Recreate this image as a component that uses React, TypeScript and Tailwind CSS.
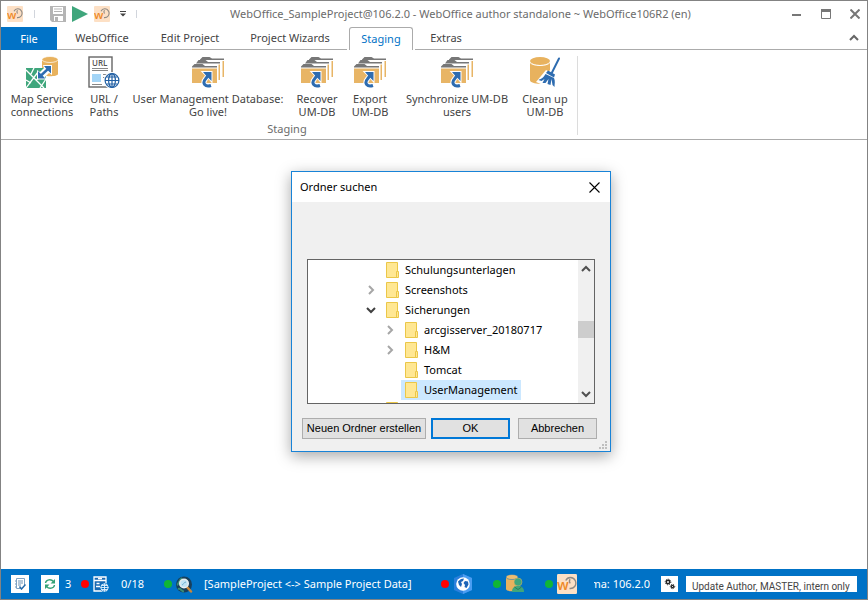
import React, { useState } from 'react';

const Logo = ({ size = 16 }: { size?: number }) => (
  <svg width={size} height={size} viewBox="0 0 16 16" aria-hidden="true">
    <rect width="16" height="16" rx="1" fill="#fde0c5" />
    <path d="M7 5.200C8.500 2 13 1.800 14.700 5.400C16 9 13.500 12 10 11.600M10.500 4.200C9.600 5.500 9.800 6.500 10.600 7.500" fill="none" stroke="#8f8a85" strokeWidth="1.100" />
    <text x="0" y="13" fontSize="11.500" fontWeight="600" fill="#ee8a2a" fontFamily="Open Sans, sans-serif">w</text>
  </svg>
);

const SaveIcon = () => (
  <svg width="16" height="16" viewBox="0 0 16 16" aria-hidden="true">
    <path d="M0 0h16v16H2l-2-2z" fill="#b5b5b5" />
    <rect x="3" y="1" width="10" height="7" fill="#fff" />
    <path d="M4 3h8M4 5.500h8" stroke="#b5b5b5" />
    <rect x="4" y="10" width="9" height="5" fill="#fff" />
    <rect x="5" y="11" width="3" height="4" fill="#b5b5b5" />
  </svg>
);

const MapServiceIcon = () => (
  <svg width="32" height="32" viewBox="0 0 32 32" aria-hidden="true">
    <path d="M16 3v15c0 3 16 3 16 0V3z" fill="#e8b25e" />
    <ellipse cx="24" cy="3.500" rx="8" ry="3" fill="#e8b25e" stroke="#fff" strokeWidth=".7" />
    <rect x="0" y="12" width="20" height="20" fill="#3fa67c" />
    <path d="M0 14l18 18M0 32l12-16M0 24l5 3M8 12l-3 6M14 32l6-9M10 24l10-6" stroke="#fff" strokeWidth="1.300" fill="none" />
    <path d="M17 9h9v10l-3-2-4 4 2 2.500H11V14l3 2 4-4z" fill="#fff" />
    <path d="M15 19.500l7.500-7" stroke="#2e6cb0" strokeWidth="2.400" />
    <path d="M18 10h7v7.500l-2.500-2.500-2.500-2.500zM12 15v7.500h7.500l-2.500-2.500-2.500-2.500z" fill="#2e6cb0" />
  </svg>
);

const UrlIcon = () => (
  <svg width="32" height="32" viewBox="0 0 32 32" aria-hidden="true">
    <rect x="1" y="1" width="23" height="30" fill="#fff" stroke="#666" strokeWidth="1.400" />
    <text x="4" y="10" fontSize="8" fontWeight="600" fill="#555" fontFamily="Open Sans, sans-serif">URL</text>
    <path d="M4 12.500h16M4 14.500h16M15 18.500h5M15 21.500h3M4 28.500h10" stroke="#888" />
    <rect x="4" y="18" width="9" height="8" fill="#a3d5f7" />
    <circle cx="24" cy="24.500" r="8.500" fill="#fff" />
    <g fill="none" stroke="#2260a4" strokeWidth="1.200">
      <circle cx="24" cy="24.500" r="6.900" />
      <ellipse cx="24" cy="24.500" rx="3.400" ry="6.900" />
      <path d="M24 17.500v14M17 24.500h14M18.500 21h11M18.500 28h11" />
    </g>
  </svg>
);

const FoldersIcon = () => (
  <svg width="32" height="32" viewBox="0 0 32 32" aria-hidden="true">
    <path d="M8 3.500L10.500 1h7L20 2.500h12v1.500H8z" fill="#777" />
    <path d="M4 7.500L6.500 4h7L16 6h12v1.500z" fill="#777" />
    <path d="M0 11.500V10.500L2.500 8h8L13 10h12v1.500z" fill="#777" />
    <path d="M0 12.500h25V27H0zM26.500 8.500H28V24h-1.500zM30.500 5H32v16h-1.500z" fill="#e8b566" />
    <path d="M19 29.500c-6 2-9-2.500-5.500-6.500l3-4" stroke="#fff" strokeWidth="5" fill="none" />
    <path d="M11 16h8.500v9l-3-3.500-2-2z" fill="#fff" stroke="#fff" strokeWidth="2" />
    <path d="M19 29.500c-6 2-9-2.500-5.500-6.500l3-4" stroke="#2e6cb0" strokeWidth="3" fill="none" />
    <path d="M11 16h8.500v9l-3-3-2.500-2.500z" fill="#2e6cb0" />
  </svg>
);

const CleanIcon = () => (
  <svg width="32" height="32" viewBox="0 0 32 32" aria-hidden="true">
    <path d="M1 6c3 4 17 4 20 0v18c0 5-20 5-20 0z" fill="#e8b25e" />
    <ellipse cx="11" cy="5" rx="10" ry="4" fill="#e8b25e" />
    <path d="M1 6.500c3 4 17 4 20 0" fill="none" stroke="#fff" />
    <path d="M31 2l-9 15" stroke="#fff" strokeWidth="5" />
    <path d="M17 14l12 6-3 12-7-1-12-5z" fill="#fff" />
    <path d="M30 2.500l-7 14" stroke="#2e6cb0" strokeWidth="2" strokeLinecap="round" />
    <path d="M19 14.500l7 4-1 3-8-4.500z" fill="#2e6cb0" />
    <path d="M16.500 18c-2 4-5 5-7 6l3 1 3-2-2 4h3l3-4-1 5 3 1 1-6 1 6 2 2c0-3 1-6-.500-9z" fill="#2e6cb0" />
  </svg>
);

const FolderIcon = () => (
  <svg width="13" height="16" viewBox="0 0 13 16" className="shrink-0" aria-hidden="true">
    <path d="M.5 .5h11v15H.5z" fill="#ffe793" stroke="#ebc748" />
    <path d="M10.500 9.500h2v6h-2z" fill="#ffe793" stroke="#ebc748" />
  </svg>
);

const Chevron = ({ d, color }: { d: string; color: string }) => (
  <svg width="10" height="10" viewBox="0 0 10 10" className="shrink-0" aria-hidden="true">
    <path d={d} fill="none" stroke={color} strokeWidth="2" />
  </svg>
);

const CheckListIcon = () => (
  <svg width="12" height="12" viewBox="0 0 12 12" aria-hidden="true">
    <path d="M2.500 .5h8v7M2.500 .5v10h4" fill="none" stroke="#7fa3c4" />
    <path d="M4 3h5M4 5h5M4 7h3M1 3h1M1 6h1M1 9h1" stroke="#6f93b5" />
    <path d="M5.500 8.500l2 2.500 4-4.500" fill="none" stroke="#2468a8" strokeWidth="1.500" />
  </svg>
);

const RefreshIcon = () => (
  <svg width="12" height="12" viewBox="0 0 12 12" aria-hidden="true">
    <path d="M1.500 5C2 1.500 7 .5 9.500 3.500M10.500 7C10 10.500 5 11.500 2.500 8.500" fill="none" stroke="#35a276" strokeWidth="1.400" />
    <path d="M11 1v4.500H6.500zM1 11V6.500h4.500z" fill="#35a276" />
  </svg>
);

const ServerIcon = () => (
  <svg width="16" height="16" viewBox="0 0 16 16" aria-hidden="true">
    <path d="M1 1h12v14H1z" fill="#1769b3" stroke="#fff" strokeWidth="1.300" />
    <path d="M1 4.500h12M3.500 7.500h3M3 10.500h4M5 2.500h4" stroke="#fff" strokeWidth="1.300" />
    <circle cx="11.500" cy="11.500" r="4.500" fill="#0072c6" />
    <g fill="none" stroke="#e4effa" strokeWidth=".9">
      <circle cx="11.500" cy="11.500" r="3.700" />
      <path d="M11.500 7.500v8M7.500 11.500h8M8.500 9.500h6M8.500 13.500h6" />
    </g>
  </svg>
);

const SearchGlobeIcon = () => (
  <svg width="17" height="17" viewBox="0 0 17 17" aria-hidden="true">
    <circle cx="8" cy="8.500" r="8" fill="#173f5c" />
    <path d="M1 9c2-1 2-5 5-7M2 13c3-1 3 2 6 2.500" stroke="#398c75" strokeWidth="2" fill="none" />
    <path d="M11 11l4 4.500" stroke="#c9863a" strokeWidth="2.500" strokeLinecap="round" />
    <circle cx="8" cy="7.500" r="4.300" fill="#bfe3f4" stroke="#e9eff1" strokeWidth="1.400" />
    <path d="M6 9c1 0 2-3 4-3" stroke="#67a9cc" fill="none" />
  </svg>
);

const HexGlobeIcon = () => (
  <svg width="18" height="20" viewBox="0 0 18 20" aria-hidden="true">
    <path d="M9 0l9 4v12l-9 4-9-4V4z" fill="#2b80dd" />
    <path d="M9 0l9 4v12l-9 4z" fill="#4a9df2" />
    <circle cx="9" cy="10" r="6.800" fill="#fff" />
    <path d="M4 7.500l3-2.500 3-.5-1 2.500-2 1 1 2-1 3-2-2zM11 7l3 .5.500 3-2 3.500-2-1 .5-2-1.500-2z" fill="#1e65b8" />
  </svg>
);

const DbUserIcon = () => (
  <svg width="18" height="20" viewBox="0 0 18 20" aria-hidden="true">
    <path d="M0 3v12c0 3 12 3 12 0V3z" fill="#e8b25e" />
    <ellipse cx="6" cy="3" rx="6" ry="2.500" fill="#eebd70" stroke="#0072c6" strokeWidth=".5" />
    <circle cx="12" cy="8" r="4" fill="#3fa67c" stroke="#e8b25e" strokeWidth=".5" />
    <path d="M6 18c0-5 3-6 6-6s6 1 6 6z" fill="#3fa67c" />
    <path d="M8.500 13l3.500 2.500 3.500-2.500" stroke="#2b7d5b" fill="none" />
  </svg>
);

const GearsIcon = () => (
  <svg width="12" height="12" viewBox="0 0 12 12" aria-hidden="true">
    <circle cx="4" cy="4" r="1.700" fill="none" stroke="#222" strokeWidth="1.500" />
    <circle cx="4" cy="4" r="2.800" fill="none" stroke="#222" strokeDasharray="1.100 1.100" />
    <circle cx="8.500" cy="8.500" r="1.200" fill="none" stroke="#222" strokeWidth="1.200" />
    <circle cx="8.500" cy="8.500" r="2.200" fill="none" stroke="#222" strokeDasharray="1 1" />
  </svg>
);

const tabs = [
  { name: 'WebOffice', width: 'w-[90px]' },
  { name: 'Edit Project', width: 'w-[86px]' },
  { name: 'Project Wizards', width: 'w-[114px]' },
  { name: 'Staging', width: 'w-16 mx-0.5' },
  { name: 'Extras', width: 'w-[62px]' }
];

const actions = [
  { lines: ['Map Service', 'connections'], icon: <MapServiceIcon />, width: 'w-[82px]' },
  { lines: ['URL /', 'Paths'], icon: <UrlIcon />, width: 'w-[42px]' },
  { lines: ['User Management Database:', 'Go live!'], icon: <FoldersIcon />, width: 'w-[166px]' },
  { lines: ['Recover', 'UM-DB'], icon: <FoldersIcon />, width: 'w-[52px]' },
  { lines: ['Export', 'UM-DB'], icon: <FoldersIcon />, width: 'w-[54px]' },
  { lines: ['Synchronize UM-DB', 'users'], icon: <FoldersIcon />, width: 'w-[120px]' },
  { lines: ['Clean up', 'UM-DB'], icon: <CleanIcon />, width: 'w-[56px]' }
];

const folders = [
  { name: 'Schulungsunterlagen', indent: 'pl-[55px]', state: 'leaf' },
  { name: 'Screenshots', indent: 'pl-[55px]', state: 'closed' },
  { name: 'Sicherungen', indent: 'pl-[55px]', state: 'open' },
  { name: 'arcgisserver_20180717', indent: 'pl-[74px]', state: 'closed' },
  { name: 'H&M', indent: 'pl-[74px]', state: 'closed' },
  { name: 'Tomcat', indent: 'pl-[74px]', state: 'leaf' },
  { name: 'UserManagement', indent: 'pl-[74px]', state: 'leaf' }
];

const Dot = ({ color }: { color: string }) => (
  <span className={`w-2 h-2 rounded-full shrink-0 ${color}`} />
);

const TitleBar = () => (
  <header className="flex items-center h-[26px] text-[#6b6b6b]">
    <button aria-label="Application menu" className="ml-1.5"><Logo /></button>
    <span className="w-px h-2 ml-[11px] bg-gray-300" />
    <button aria-label="Save" className="ml-[15px]"><SaveIcon /></button>
    <button aria-label="Run" className="ml-1.5">
      <svg width="16" height="16" viewBox="0 0 16 16"><path d="M0 0l16 8-16 8z" fill="#3fa67c" /></svg>
    </button>
    <button aria-label="WebOffice" className="ml-1.5"><Logo /></button>
    <button aria-label="Customize toolbar" className="ml-2.5">
      <svg width="6" height="6" viewBox="0 0 6 6"><path d="M0 0h6v1H0zM0 2.500h6l-3 3z" fill="#444" /></svg>
    </button>
    <span className="w-px h-2 ml-2.5 bg-gray-300" />
    <h1 className="flex-1 text-center whitespace-nowrap">
      WebOffice_SampleProject@106.2.0 - WebOffice author standalone ~ WebOffice106R2 (en)
    </h1>
    <button aria-label="Minimize" className="ml-2">
      <svg width="10" height="10" viewBox="0 0 10 10"><path d="M0 6h9" stroke="#777" strokeWidth="2" /></svg>
    </button>
    <button aria-label="Maximize" className="ml-[19px]">
      <svg width="10" height="10" viewBox="0 0 10 10"><path d="M.5 1v8.500h9V1" fill="none" stroke="#777" /><path d="M0 1.500h10" stroke="#777" strokeWidth="3" /></svg>
    </button>
    <button aria-label="Close" className="ml-[19px] mr-[7px]">
      <svg width="10" height="10" viewBox="0 0 10 10"><path d="M.5 .5l9 9M9.500 .5l-9 9" stroke="#777" strokeWidth="2" /></svg>
    </button>
  </header>
);

const FolderDialog = () => {
  const [selected, setSelected] = useState('UserManagement');

  return (
    <div role="dialog" aria-label="Ordner suchen" className="absolute left-[290px] top-[31px] w-80 bg-[#f0f0f0] border border-[#1883d7] shadow-[0_4px_14px_rgba(0,0,0,0.35)] text-black">
      <div className="flex items-center justify-between h-[30px] pl-2 pr-2.5 bg-white">
        <h2>Ordner suchen</h2>
        <button aria-label="Schließen">
          <svg width="11" height="11" viewBox="0 0 11 11"><path d="M.5 .5l10 10M10.500 .5l-10 10" stroke="#000" strokeWidth="1.100" /></svg>
        </button>
      </div>

      <div className="flex h-[145px] mt-[57px] mx-[15px] bg-white border border-[#646464]">
        <ul role="tree" className="flex-1 overflow-hidden">
          {folders.map((folder) => (
            <li key={folder.name} role="treeitem" aria-selected={selected === folder.name} className={`flex items-center h-5 ${folder.indent}`}>
              <span className="flex justify-center w-[19px] pr-1">
                {folder.state === 'closed' && <Chevron d="M3 1l4 4-4 4" color="#a6a6a6" />}
                {folder.state === 'open' && <Chevron d="M1 3l4 4 4-4" color="#404040" />}
              </span>
              <button
                onClick={() => setSelected(folder.name)}
                className={`flex items-center h-5 gap-1.5 px-1 whitespace-nowrap ${selected === folder.name ? 'bg-[#cce8ff]' : ''}`}
              >
                <FolderIcon />
                {folder.name}
              </button>
            </li>
          ))}
          <li className="pt-0.5 pl-[78px]"><FolderIcon /></li>
        </ul>
        <div className="flex flex-col items-center justify-between w-4 py-1 bg-[#f0f0f0]">
          <Chevron d="M1 7l4-4 4 4" color="#505050" />
          <span className="w-full h-[17px] mb-1 bg-[#cdcdcd]" />
          <Chevron d="M1 3l4 4 4-4" color="#505050" />
        </div>
      </div>

      <div className="flex pl-2.5 mt-3.5 h-[21px] font-['Liberation_Sans',sans-serif]">
        <button className="w-[124px] bg-[#e1e1e1] border border-[#adadad] whitespace-nowrap leading-none">Neuen Ordner erstellen</button>
        <button className="w-[79px] ml-[5px] bg-[#e1e1e1] border-2 border-[#0078d7] leading-none">OK</button>
        <button className="w-[79px] ml-2 bg-[#e1e1e1] border border-[#adadad] leading-none">Abbrechen</button>
      </div>
      <svg width="8" height="8" viewBox="0 0 8 8" className="ml-auto mr-[3px] mt-0.5 mb-0.5" aria-hidden="true">
        <path d="M6 0h2v2H6zM3 3h2v2H3zM6 3h2v2H6zM0 6h2v2H0zM3 6h2v2H3zM6 6h2v2H6z" fill="#bfbfbf" />
      </svg>
    </div>
  );
};

const StatusBar = () => (
  <footer className="flex items-center h-[30px] bg-[#0072c6] text-white whitespace-nowrap">
    <button aria-label="Check project" className="flex items-center justify-center w-[18px] h-[18px] ml-2.5 bg-white"><CheckListIcon /></button>
    <button aria-label="Refresh" className="flex items-center justify-center w-[18px] h-[18px] ml-3 bg-white"><RefreshIcon /></button>
    <span className="w-4 ml-1.5">3</span>
    <Dot color="bg-[#ff0000]" />
    <span className="ml-1"><ServerIcon /></span>
    <span className="w-[43px] ml-3">0/18</span>
    <Dot color="bg-[#10b636]" />
    <span className="ml-1"><SearchGlobeIcon /></span>
    <span className="w-[237px] ml-[11px]">[SampleProject &lt;-&gt; Sample Project Data]</span>
    <Dot color="bg-[#ff0000]" />
    <span className="ml-[5px]"><HexGlobeIcon /></span>
    <span className="ml-[21px] flex"><Dot color="bg-[#10b636]" /></span>
    <span className="ml-[5px]"><DbUserIcon /></span>
    <span className="ml-[21px] flex"><Dot color="bg-[#10b636]" /></span>
    <span className="ml-1"><Logo size={20} /></span>
    <span className="flex justify-end w-14 ml-[17px] overflow-hidden">ma: 106.2.0</span>
    <button aria-label="Settings" className="flex items-center justify-center w-[17px] h-4 ml-[11px] bg-white"><GearsIcon /></button>
    <input
      aria-label="Update note"
      readOnly
      value="Update Author, MASTER, intern only"
      className="flex-1 min-w-0 h-4 pt-1.5 pl-1.5 ml-2 mr-2.5 bg-white text-[#444] font-[Roboto,sans-serif] text-[10px]"
    />
  </footer>
);

const App = () => {
  const [activeTab, setActiveTab] = useState('Staging');

  return (
    <div className="flex flex-col min-h-screen bg-white border border-[#838383] font-['Noto_Sans',sans-serif] text-[11px] leading-4 text-[#444]">
      <TitleBar />

      <nav className="flex h-[23px]">
        <button className="w-14 bg-[#0072c6] text-white">File</button>
        {tabs.map((tab) => (
          <button
            key={tab.name}
            onClick={() => setActiveTab(tab.name)}
            className={`whitespace-nowrap ${tab.width} ${
              activeTab === tab.name
                ? 'text-[#0072c6] border border-b-0 border-[#ababab] rounded-t-[3px]'
                : 'border-b border-b-[#ababab]'
            }`}
          >
            {tab.name}
          </button>
        ))}
        <div className="flex items-center justify-end flex-1 pr-2 border-b border-[#ababab]">
          <button aria-label="Collapse ribbon">
            <Chevron d="M1 7l4-4 4 4" color="#666" />
          </button>
        </div>
      </nav>

      <section className="flex pt-1.5 pb-1 border-b border-[#ababab]">
        <div className="border-r border-[#dcdcdc] pr-1">
          <div className="flex">
            {actions.map((action) => (
              <button key={action.lines.join(' ')} className={`flex flex-col items-center whitespace-nowrap leading-[13px] ${action.width}`}>
                {action.icon}
                <span className="mt-1">
                  {action.lines[0]}
                  <br />
                  {action.lines[1]}
                </span>
              </button>
            ))}
          </div>
          <p className="mt-1 leading-[13px] text-center text-[#6b6b6b]">Staging</p>
        </div>
      </section>

      <main className="relative flex-1">
        <FolderDialog />
      </main>

      <StatusBar />
    </div>
  );
};

export default App;
